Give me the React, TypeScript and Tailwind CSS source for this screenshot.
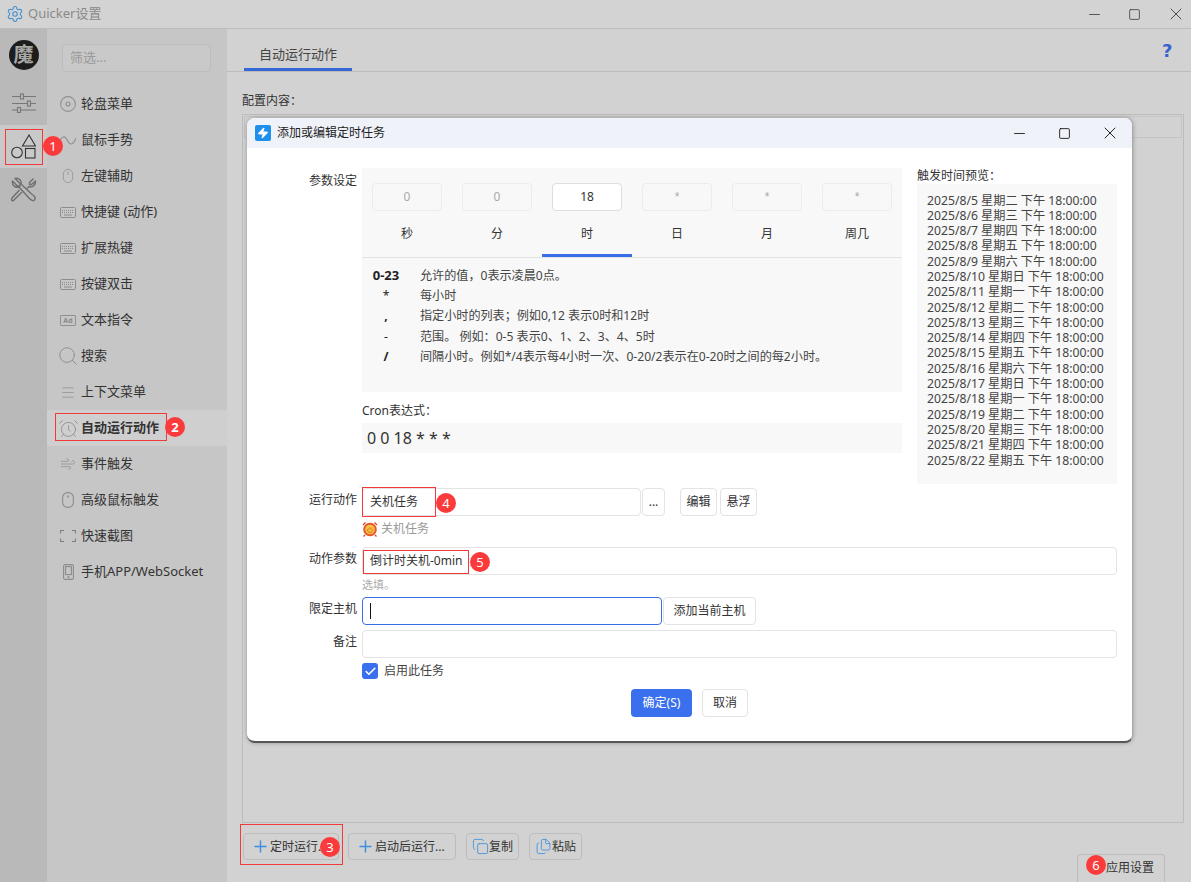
import { AlarmClock, Check, Copy, Files, Menu, Minus, Mouse, Plus, Search, Settings, Square, Wind, X, Zap } from "lucide-react";
import type { ReactNode } from "react";

const FONT = "font-['Noto_Sans','Noto_Sans_CJK_SC',sans-serif]";

function Badge({ n, className }: { n: number; className: string }) {
  return (
    <span className={`absolute z-20 flex h-5 w-5 items-center justify-center rounded-full bg-[#fb3b3b] text-[13px] leading-none text-white ${className}`}>
      {n}
    </span>
  );
}

function DiscIcon() {
  return (
    <svg width="16" height="16" viewBox="0 0 16 16" fill="none" stroke="#909090" strokeWidth="1.1">
      <circle cx="8" cy="8" r="7.400" />
      <circle cx="8" cy="8" r="2" />
    </svg>
  );
}

function WaveIcon() {
  return (
    <svg width="16" height="14" viewBox="0 0 16 14" fill="none" stroke="#909090" strokeWidth="1.1">
      <path d="M0 9C1.500 2.500 5 2.500 7.500 7.500S13 12.500 16 5" />
    </svg>
  );
}

function KeyboardIcon() {
  return (
    <svg width="16" height="11" viewBox="0 0 16 11" fill="none" stroke="#8c8c8c">
      <rect x=".5" y=".5" width="15" height="10" rx="1" />
      <path d="M2 3.500h12M2 5.500h12" strokeDasharray="1 1" />
      <path d="M4 8h8" />
    </svg>
  );
}

function AdIcon() {
  return (
    <span className="flex h-[11px] w-[16px] items-center justify-center rounded-[1px] border border-[#8f8f8f] text-[7px] font-bold leading-none text-[#8a8a8a]">
      Ad
    </span>
  );
}

function CornersIcon() {
  return (
    <svg width="16" height="12" viewBox="0 0 16 12" fill="none" stroke="#7d7d7d" strokeWidth="1.1">
      <path d="M.5 3.500V.5H4M12 .5h3.500v3M15.500 8.500v3H12M4 11.500H.5v-3" />
    </svg>
  );
}

function ClickerIcon() {
  return (
    <svg width="12" height="16" viewBox="0 0 12 16" fill="none" stroke="#8c8c8c" strokeWidth="1.1">
      <rect x=".6" y=".6" width="10.800" height="14.800" rx="5" />
      <path d="M6 3.500v2" strokeWidth="1.600" />
    </svg>
  );
}

function PhoneIcon() {
  return (
    <svg width="11" height="16" viewBox="0 0 11 16" fill="none" stroke="#8c8c8c" strokeWidth="1.1">
      <rect x=".6" y=".6" width="9.800" height="14.800" rx="1.500" />
      <rect x="2.600" y="2.600" width="5.800" height="8" />
      <circle cx="5.500" cy="13" r=".5" />
    </svg>
  );
}

function ShutdownClockIcon() {
  return (
    <svg width="16" height="16" viewBox="0 0 16 16" fill="none">
      <path d="M1 4 3.500 1.500M15 4 12.500 1.500M3 14l-1.500 1.500M13 14l1.500 1.500" stroke="#d9481c" strokeWidth="1.300" />
      <circle cx="8" cy="8.500" r="5.800" fill="#f6c343" stroke="#e8562a" strokeWidth="2" />
      <path d="M6.300 7.500a2.400 2.400 0 1 0 3.400 0M8 6.300v2.400" stroke="#e0651f" strokeWidth=".9" />
    </svg>
  );
}

const thin = { color: "#8c8c8c", strokeWidth: 1.05 };

const menuItems: { label: string; icon: ReactNode; active?: boolean }[] = [
  { label: "轮盘菜单", icon: <DiscIcon /> },
  { label: "鼠标手势", icon: <WaveIcon /> },
  { label: "左键辅助", icon: <Mouse size={20} {...thin} /> },
  { label: "快捷键 (动作)", icon: <KeyboardIcon /> },
  { label: "扩展热键", icon: <KeyboardIcon /> },
  { label: "按键双击", icon: <KeyboardIcon /> },
  { label: "文本指令", icon: <AdIcon /> },
  { label: "搜索", icon: <Search className="shrink-0" size={22} color="#8c8c8c" strokeWidth={1} /> },
  { label: "上下文菜单", icon: <Menu size={21} {...thin} /> },
  { label: "自动运行动作", icon: <AlarmClock className="shrink-0" size={21} color="#8c8c8c" strokeWidth={1} />, active: true },
  { label: "事件触发", icon: <Wind size={20} {...thin} /> },
  { label: "高级鼠标触发", icon: <ClickerIcon /> },
  { label: "快速截图", icon: <CornersIcon /> },
  { label: "手机APP/WebSocket", icon: <PhoneIcon /> },
];

const cronFields = [
  { value: "0", label: "秒" },
  { value: "0", label: "分" },
  { value: "18", label: "时", active: true },
  { value: "*", label: "日" },
  { value: "*", label: "月" },
  { value: "*", label: "周几" },
];

const helpRows = [
  { sym: "0-23", text: "允许的值，0表示凌晨0点。", weight: "font-bold text-[13px]" },
  { sym: "*", text: "每小时", weight: "font-normal" },
  { sym: ",", text: "指定小时的列表；例如0,12 表示0时和12时", weight: "font-bold" },
  { sym: "-", text: "范围。 例如：0-5 表示0、1、2、3、4、5时", weight: "font-normal" },
  { sym: "/", text: "间隔小时。例如*/4表示每4小时一次、0-20/2表示在0-20时之间的每2小时。", weight: "font-bold" },
];

const previews = [
  "2025/8/5 星期二", "2025/8/6 星期三", "2025/8/7 星期四", "2025/8/8 星期五", "2025/8/9 星期六",
  "2025/8/10 星期日", "2025/8/11 星期一", "2025/8/12 星期二", "2025/8/13 星期三", "2025/8/14 星期四",
  "2025/8/15 星期五", "2025/8/16 星期六", "2025/8/17 星期日", "2025/8/18 星期一", "2025/8/19 星期二",
  "2025/8/20 星期三", "2025/8/21 星期四", "2025/8/22 星期五",
];

function Rail() {
  return (
    <div className="flex w-[47px] shrink-0 flex-col bg-[#b9b9b9]">
      <div className="flex h-[96px] flex-col items-center pt-[11px]">
        <div className="flex h-[30px] w-[30px] items-center justify-center overflow-hidden rounded-full bg-[#1d1d1d] text-[20px] font-bold leading-none text-[#a8a8a4]">
          魔
        </div>
        <svg className="mt-[23px]" width="24" height="20" viewBox="0 0 24 20" fill="none" stroke="#777" strokeWidth="1.100">
          <path d="M0 3.500h24M0 10.500h24M0 17h24" />
          <rect x="8.500" y="1" width="3" height="5" fill="#b9b9b9" />
          <rect x="15.500" y="8" width="3" height="5" fill="#b9b9b9" />
          <rect x="5.500" y="14.500" width="3" height="5" fill="#b9b9b9" />
        </svg>
      </div>
      <div className="relative flex h-[43px] items-center justify-center bg-[#c9c9c9]">
        <span className="absolute left-[5px] top-[4px] h-[36px] w-[38px] border border-[#f23a3a]" />
        <svg width="25" height="25" viewBox="0 0 25 25" fill="none" stroke="#333" strokeWidth="1.100">
          <path d="M18 1 11.500 12h13Z" />
          <circle cx="6" cy="18.500" r="5.300" />
          <rect x="14.500" y="14.500" width="9.500" height="9.500" />
        </svg>
        <Badge n={1} className="left-[43px] top-[11px]" />
      </div>
      <div className="flex h-[43px] items-center justify-center">
        <svg width="26" height="26" viewBox="0 0 26 26" fill="none" stroke="#6f6f6f" strokeWidth="1.400" strokeLinejoin="round">
          <path d="M4 1.500 9 6.500V9H6.500L1.500 4C.8 8 4 11 8 10L18 21c1.500 2 5 4 5.500 1.500 2-2-1-4-3-5.500L10 7C11 4 8 .5 4 1.500Z" />
          <path d="M22.500 1.500 18.500 5.500v2h2l4-3.500C25 8 21.500 10.500 18 9.500L16 11.500" />
          <path d="M11 15 3 23c-1 1-2.500 1-2.500-.5L1 21l7.500-8" />
        </svg>
      </div>
    </div>
  );
}

function Sidebar() {
  return (
    <div className="flex w-[180px] shrink-0 flex-col bg-[#c6c6c6]">
      <div className="mx-[15px] mt-[15px] flex h-[28px] w-[149px] items-center rounded-[4px] border border-[#bcbcbc] bg-[#c9c9c9] px-[7px] text-[13px] text-[#9a9a9a]">
        筛选...
      </div>
      <div className="mt-[14px] flex flex-col">
        {menuItems.map((item) => (
          <div key={item.label} className={`relative flex h-[36px] items-center pl-[13px] text-[13px] text-[#333] ${item.active ? "bg-[#cfcfcf] font-bold" : ""}`}>
            {item.active && (
              <>
                <span className="absolute left-[8px] top-[3px] h-[28px] w-[112px] border border-[#f23a3a]" />
                <Badge n={2} className="left-[118px] top-[7px]" />
              </>
            )}
            <span className="flex w-[16px] shrink-0 items-center justify-center">{item.icon}</span>
            <span className="ml-[5px]">{item.label}</span>
          </div>
        ))}
      </div>
    </div>
  );
}

function SmallButton({ children, className = "" }: { children: ReactNode; className?: string }) {
  return (
    <div className={`flex h-[28px] items-center justify-center rounded-[4px] border border-[#e3e3e3] bg-white text-[12px] text-[#333] ${className}`}>
      {children}
    </div>
  );
}

function FormRow({ label, children, className = "" }: { label: string; children: ReactNode; className?: string }) {
  return (
    <div className={`flex ${className}`}>
      <div className="w-[115px] shrink-0 pr-[5px] pt-[3px] text-right text-[12px] leading-[18px] text-[#333]">{label}</div>
      <div className="flex min-w-0 flex-1">{children}</div>
    </div>
  );
}

function Field({ children, className = "", focused = false }: { children?: ReactNode; className?: string; focused?: boolean }) {
  return (
    <div className={`flex h-[28px] items-center rounded-[4px] border bg-white px-[7px] text-[12px] text-[#333] ${focused ? "border-[#3a6ee8]" : "border-[#e3e3e3]"} ${className}`}>
      {children}
    </div>
  );
}

function CronPanel() {
  return (
    <div className="w-[540px] shrink-0">
      <div className="bg-[#f8f8f8]">
        <div className="grid grid-cols-6 pt-[15px]">
          {cronFields.map((f) => (
            <div key={f.label} className="flex flex-col items-center">
              <div className={`flex h-[28px] w-[70px] items-center justify-center rounded-[4px] border text-[12px] ${f.active ? "border-[#dedede] bg-white text-[#333]" : "border-[#ececec] bg-[#f8f8f8] text-[#aaa]"} ${f.value === "*" ? "font-['Liberation_Sans',sans-serif]" : ""}`}>
                {f.value}
              </div>
              <div className={`mt-[8px] flex h-[38px] w-full items-start justify-center pt-[6px] text-[12px] text-[#333] ${f.active ? "border-b-[3px] border-[#3a6ee8]" : ""}`}>
                {f.label}
              </div>
            </div>
          ))}
        </div>
        <div className="border-t border-[#e2e2e2] pb-[25px] pt-[8px]">
          {helpRows.map((r) => (
            <div key={r.sym} className="flex h-[20.200px] items-center text-[12.100px] text-[#444]">
              <span className={`w-[58px] pr-[10px] text-center text-[#222] ${r.weight}`}>{r.sym}</span>
              <span>{r.text}</span>
            </div>
          ))}
        </div>
      </div>
      <div className="mt-[10px] text-[12px] leading-[18px] text-[#333]">Cron表达式：</div>
      <div className="mt-[3px] flex h-[30px] items-center bg-[#f8f8f8] px-[5px] text-[16px] text-[#333]">0 0 18 * * *</div>
    </div>
  );
}

function TaskDialog() {
  return (
    <div className="absolute left-[20px] top-[89px] z-10 h-[625px] w-[886px] overflow-hidden rounded-[8px] border-b-2 border-r border-[#555] border-r-[#aaa] bg-white shadow-[0_0_4px_rgba(0,0,0,0.3)]">
      <div className="flex h-[30px] items-center bg-[#f0f2f9] pl-[8px]">
        <span className="flex h-4 w-4 items-center justify-center rounded-[2px] bg-[#1f8fee]">
          <Zap size={12} color="#fff" fill="#fff" />
        </span>
        <span className="ml-[6px] text-[12px] text-[#222]">添加或编辑定时任务</span>
        <div className="ml-auto flex items-center text-[#111]">
          <Minus size={17} strokeWidth={1.2} className="mr-[30px]" />
          <Square size={13} strokeWidth={1.6} className="mr-[29px]" />
          <X size={20} strokeWidth={1.1} className="mr-[12px]" />
        </div>
      </div>
      <div className="flex pt-[20px]">
        <div className="w-[115px] shrink-0 pr-[5px] pt-[4px] text-right text-[12px] leading-[18px] text-[#333]">参数设定</div>
        <CronPanel />
        <div className="ml-[15px] w-[200px] shrink-0">
          <div className="text-[12px] leading-[16px] text-[#333]">触发时间预览：</div>
          <div className="h-[300px] bg-[#f8f8f8] px-[10px] pt-[8.500px]">
            {previews.map((p) => (
              <div key={p} className="h-[15.300px] whitespace-nowrap text-[12.200px] leading-[15.300px] text-[#444]">
                {p} 下午 18:00:00
              </div>
            ))}
          </div>
        </div>
      </div>
      <div className="pr-[15px]">
        <FormRow label="运行动作" className="relative mt-[4px]">
          <span className="absolute left-[115px] top-[-1px] z-10 h-[30px] w-[74px] border border-[#f23a3a]" />
          <Badge n={4} className="left-[189px] top-[5px]" />
          <Field className="w-[279px]">关机任务</Field>
          <SmallButton className="ml-[1px] w-[23px]">...</SmallButton>
          <SmallButton className="ml-[15px] w-[37px]">编辑</SmallButton>
          <SmallButton className="ml-[3px] w-[37px]">悬浮</SmallButton>
        </FormRow>
        <div className="ml-[115px] mt-[4px] flex h-[18px] items-center text-[12px] text-[#999]">
          <ShutdownClockIcon />
          <span className="ml-[3px]">关机任务</span>
        </div>
        <FormRow label="动作参数" className="relative mt-[9px]">
          <span className="absolute left-[116px] top-[3px] z-10 h-[24px] w-[106px] border border-[#f23a3a]" />
          <Badge n={5} className="left-[223px] top-[5px]" />
          <Field className="w-[755px]">倒计时关机-0min</Field>
        </FormRow>
        <div className="ml-[115px] h-[22px] text-[11px] leading-[20px] text-[#aaa]">选填。</div>
        <FormRow label="限定主机">
          <Field className="w-[300px]" focused>
            <span className="h-[16px] w-px bg-[#111]" />
          </Field>
          <SmallButton className="ml-[1px] w-[93px]">添加当前主机</SmallButton>
        </FormRow>
        <FormRow label="备注" className="mt-[5px]">
          <Field className="w-[755px]" />
        </FormRow>
        <div className="ml-[115px] mt-[5px] flex h-[16px] items-center text-[12px] text-[#444]">
          <span className="flex h-4 w-4 items-center justify-center rounded-[3px] bg-[#3a70ee]">
            <Check size={13} color="#fff" strokeWidth={3} />
          </span>
          <span className="ml-[6px]">启用此任务</span>
        </div>
        <div className="ml-[384px] mt-[10px] flex">
          <div className="flex h-[28px] w-[61px] items-center justify-center rounded-[4px] bg-[#3a70ee] text-[12px] text-white">确定(S)</div>
          <SmallButton className="ml-[10px] w-[46px]">取消</SmallButton>
        </div>
      </div>
    </div>
  );
}

function ToolButton({ icon, label, className = "" }: { icon: ReactNode; label: string; className?: string }) {
  return (
    <div className={`flex h-[27px] items-center rounded-[4px] border border-[#bdbdbd] text-[12px] text-[#333] ${className}`}>
      {icon}
      <span className="whitespace-nowrap">{label}</span>
    </div>
  );
}

function Main() {
  return (
    <div className="relative flex min-w-0 flex-1 flex-col bg-[#d2d2d2]">
      <div className="relative flex h-[43px] shrink-0 items-end border-b border-[#bcbcbc] pl-[17px]">
        <div className="flex h-[26px] w-[108px] justify-center border-b-[3px] border-[#3567d6] text-[13px] leading-[18px] text-[#444]">自动运行动作</div>
        <span className="absolute left-[935px] top-[9px] font-['DejaVu_Sans',sans-serif] text-[18px] font-bold leading-[26px] text-[#3a63cf]">?</span>
      </div>
      <div className="ml-[15px] mt-[20px] text-[12px] leading-[18px] text-[#333]">配置内容：</div>
      <div className="ml-[15px] mr-[7px] mt-[4px] h-[709px] border border-[#bcbcbc] p-[1px] pr-[1px]">
        <div className="flex h-[22px] border border-[#c4c4c4]">
          <span className="w-[272px] border-r border-[#c4c4c4]" />
          <span className="ml-[509px] w-[70px] border-l border-r border-[#c4c4c4]" />
        </div>
      </div>
      <div className="flex pl-[16px] pt-[10px]">
        <div className="relative">
          <span className="absolute left-[-3px] top-[-9px] h-[41px] w-[103px] border border-[#f23a3a]" />
          <Badge n={3} className="left-[77px] top-[4px]" />
          <ToolButton icon={<Plus size={19} color="#3f8fe0" strokeWidth={1.8} />} label="定时运行..." className="w-[96px] pl-[7px]" />
        </div>
        <ToolButton icon={<Plus size={19} color="#3f8fe0" strokeWidth={1.8} />} label="启动后运行..." className="ml-[9px] w-[108px] pl-[7px]" />
        <ToolButton icon={<Copy size={17} color="#3f8fe0" strokeWidth={1.2} />} label="复制" className="ml-[10px] w-[53px] pl-[5px]" />
        <ToolButton icon={<Files size={17} color="#3f8fe0" strokeWidth={1.2} />} label="粘贴" className="ml-[10px] w-[53px] pl-[5px]" />
      </div>
      <div className="absolute left-[850px] top-[825px] flex h-[28px] w-[88px] justify-end rounded-t-[4px] border border-b-0 border-[#bdbdbd] pr-[10px] pt-[4px] text-[12px] leading-[18px] text-[#333]">
        应用设置
        <Badge n={6} className="left-[8px] top-[0px]" />
      </div>
      <TaskDialog />
    </div>
  );
}

export default function App() {
  return (
    <div className={`flex h-[882px] w-[1191px] flex-col overflow-hidden ${FONT}`}>
      <div className="flex h-[29px] shrink-0 items-center border-b border-[#bcbcbc] bg-[#d3d3d3] pl-[6px]">
        <Settings size={18} color="#3f8fcf" strokeWidth={1.4} />
        <span className="ml-[4px] text-[13px] text-[#8a8a8a]">Quicker设置</span>
        <div className="ml-auto flex items-center text-[#333]">
          <Minus size={17} strokeWidth={1.1} className="mr-[25px]" />
          <Square size={13} strokeWidth={1.4} className="mr-[25px]" />
          <X size={20} strokeWidth={1} className="mr-[5px]" />
        </div>
      </div>
      <div className="flex min-h-0 flex-1">
        <Rail />
        <Sidebar />
        <Main />
      </div>
    </div>
  );
}
